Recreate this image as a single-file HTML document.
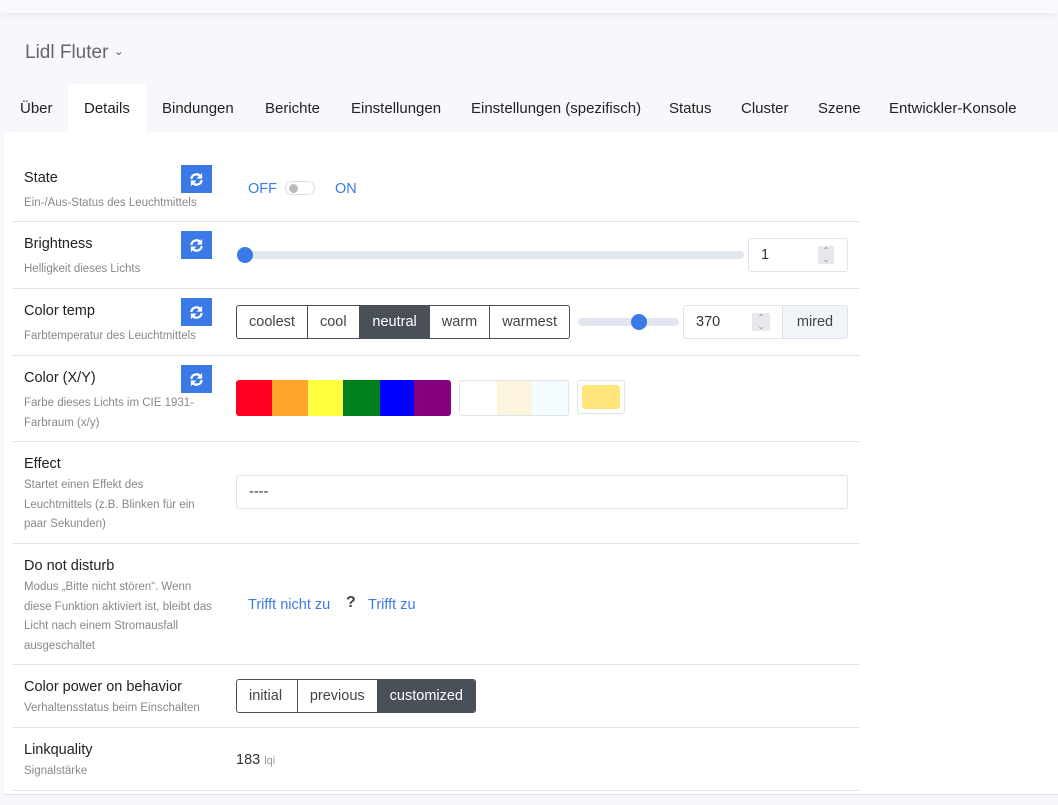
<!DOCTYPE html>
<html><head><meta charset="utf-8"><style>
*{box-sizing:border-box;margin:0;padding:0}
body{width:1058px;height:805px;background:#f7f8fc;font-family:"Liberation Sans",sans-serif;color:#333;position:relative;overflow:hidden}
.a{position:absolute}
.top{left:0;top:0;width:1058px;height:13px;background:#f8f9fc;box-shadow:0 2px 8px rgba(0,0,0,.06)}
.tab{top:100px;font-size:15px;color:#222}
.card{left:4px;top:132px;width:1054px;height:663px;background:#fff;border-bottom:1px solid #dfe3ea}
.line{left:12px;width:848px;height:1px;background:#dfe3ea}
.t{left:24px;font-size:14.5px;color:#222}
.s{left:24px;font-size:11.5px;color:#888;line-height:19.5px;width:185px}
.rb{left:181px;width:31px;height:28px;background:#3b7ae6;color:#fff;display:flex;align-items:center;justify-content:center}
.bg{display:flex;border:1px solid #4a5058;border-radius:3px;overflow:hidden;height:34px}
.bg div{padding:0 12px;line-height:32px;font-size:14.5px;color:#444;border-left:1px solid #4a5058}
.bg div:first-child{border-left:none}
.bg .on{background:#4a5058;color:#fff}
.lk{color:#3b7ae6;font-size:14.5px}
</style></head><body>
<div class="a top"></div>
<div class="a" style="left:25px;top:42px;font-size:19px;color:#666">Lidl Fluter <span style="font-size:12px;vertical-align:3px">&#8964;</span></div>
<div class="a" style="left:68px;top:84px;width:78px;height:50px;background:#fff"></div>
<div class="a tab" style="left:20px">Über</div>
<div class="a tab" style="left:84px">Details</div>
<div class="a tab" style="left:162px">Bindungen</div>
<div class="a tab" style="left:265px">Berichte</div>
<div class="a tab" style="left:351px">Einstellungen</div>
<div class="a tab" style="left:471px">Einstellungen (spezifisch)</div>
<div class="a tab" style="left:669px">Status</div>
<div class="a tab" style="left:741px">Cluster</div>
<div class="a tab" style="left:818px">Szene</div>
<div class="a tab" style="left:889px">Entwickler-Konsole</div>
<div class="a card"></div>

<svg width="0" height="0" style="position:absolute"><defs><symbol id="r" viewBox="0 0 16 16"><path d="M2.5 7.5a5.5 5.5 0 0 1 9.7-3" stroke="#fff" stroke-width="2.4" fill="none"/><path d="M14 1v6h-6z" fill="#fff"/><path d="M13.5 8.5a5.5 5.5 0 0 1-9.7 3" stroke="#fff" stroke-width="2.4" fill="none"/><path d="M2 15v-6h6z" fill="#fff"/></symbol></defs></svg>

<div class="a t" style="top:170px">State</div>
<div class="a s" style="top:194px;width:200px">Ein-/Aus-Status des Leuchtmittels</div>
<div class="a rb" style="top:165px"><svg width="15" height="15"><use href="#r"/></svg></div>
<div class="a lk" style="left:248px;top:181px">OFF</div>
<div class="a" style="left:285px;top:181px;width:30px;height:14px;border:1px solid #ddd;border-radius:7px"><div style="margin:2px 0 0 3px;width:9px;height:9px;border-radius:50%;background:#bbb"></div></div>
<div class="a lk" style="left:335px;top:181px">ON</div>
<div class="a line" style="top:221px"></div>

<div class="a t" style="top:236px">Brightness</div>
<div class="a s" style="top:260px">Helligkeit dieses Lichts</div>
<div class="a rb" style="top:231px"><svg width="15" height="15"><use href="#r"/></svg></div>
<div class="a" style="left:238px;top:251px;width:506px;height:8px;background:#e2e6ee;border-radius:4px"></div>
<div class="a" style="left:237px;top:247px;width:16px;height:16px;border-radius:50%;background:#3b7ae6"></div>
<div class="a" style="left:748px;top:238px;width:100px;height:34px;border:1px solid #dfe3ea;border-radius:3px;padding:8px 12px;font-size:14.5px">1</div>
<div class="a" style="left:818px;top:246px;width:16px;height:18px;background:#e8e8ec;font-size:8px;color:#888;text-align:center;line-height:9px">&#8963;<br>&#8964;</div>
<div class="a line" style="top:288px"></div>

<div class="a t" style="top:303px">Color temp</div>
<div class="a s" style="top:327px;width:200px">Farbtemperatur des Leuchtmittels</div>
<div class="a rb" style="top:298px"><svg width="15" height="15"><use href="#r"/></svg></div>
<div class="a bg" style="left:236px;top:305px;width:334px"><div style="flex:72">coolest</div><div style="flex:52">cool</div><div class="on" style="flex:70">neutral</div><div style="flex:61">warm</div><div style="flex:79">warmest</div></div>
<div class="a" style="left:578px;top:318px;width:101px;height:8px;background:#e2e6ee;border-radius:4px"></div>
<div class="a" style="left:631px;top:314px;width:16px;height:16px;border-radius:50%;background:#3b7ae6"></div>
<div class="a" style="left:683px;top:305px;width:165px;height:34px;border:1px solid #dfe3ea;border-radius:3px"></div>
<div class="a" style="left:696px;top:314px;font-size:14.5px">370</div>
<div class="a" style="left:752px;top:313px;width:18px;height:18px;background:#e8e8ec;font-size:8px;color:#888;text-align:center;line-height:9px">&#8963;<br>&#8964;</div>
<div class="a" style="left:782px;top:306px;width:65px;height:32px;background:#f1f4f8;border-left:1px solid #dfe3ea;font-size:14.5px;color:#444;text-align:center;line-height:32px">mired</div>
<div class="a line" style="top:355px"></div>

<div class="a t" style="top:370px">Color (X/Y)</div>
<div class="a s" style="top:394px;width:180px">Farbe dieses Lichts im CIE 1931-Farbraum (x/y)</div>
<div class="a rb" style="top:365px"><svg width="15" height="15"><use href="#r"/></svg></div>
<div class="a" style="left:236px;top:380px;width:215px;height:36px;display:flex;border-radius:3px;overflow:hidden">
<div style="flex:29;background:#ff0020"></div><div style="flex:30;background:#ffa52e"></div><div style="flex:28;background:#ffff40"></div><div style="flex:30;background:#00801c"></div><div style="flex:28;background:#0000ff"></div><div style="flex:30;background:#84007f"></div></div>
<div class="a" style="left:459px;top:380px;width:110px;height:36px;display:flex;border:1px solid #dfe3ea;border-radius:3px;overflow:hidden"><div style="flex:30;background:#fff"></div><div style="flex:29;background:#fcf4dd"></div><div style="flex:29;background:#f5fcff"></div></div>
<div class="a" style="left:577px;top:380px;width:48px;height:34px;border:1px solid #dfe3ea;border-radius:3px;padding:4px"><div style="width:38px;height:24px;background:#ffe57a;border-radius:3px"></div></div>
<div class="a line" style="top:441px"></div>

<div class="a t" style="top:456px">Effect</div>
<div class="a s" style="top:476px;width:178px">Startet einen Effekt des Leuchtmittels (z.B. Blinken für ein paar Sekunden)</div>
<div class="a" style="left:236px;top:475px;width:612px;height:34px;border:1px solid #dfe3ea;border-radius:3px;padding:8px 12px;font-size:14.5px">----</div>
<div class="a line" style="top:543px"></div>

<div class="a t" style="top:558px">Do not disturb</div>
<div class="a s" style="top:578px;width:190px">Modus „Bitte nicht stören“. Wenn diese Funktion aktiviert ist, bleibt das Licht nach einem Stromausfall ausgeschaltet</div>
<div class="a lk" style="left:248px;top:597px">Trifft nicht zu</div>
<div class="a" style="left:346px;top:594px;font-size:16px;font-weight:bold;color:#444">?</div>
<div class="a lk" style="left:368px;top:597px">Trifft zu</div>
<div class="a line" style="top:664px"></div>

<div class="a t" style="top:679px">Color power on behavior</div>
<div class="a s" style="top:699px;width:200px">Verhaltensstatus beim Einschalten</div>
<div class="a bg" style="left:236px;top:679px;width:240px"><div style="flex:60">initial</div><div style="flex:80">previous</div><div class="on" style="flex:100">customized</div></div>
<div class="a line" style="top:727px"></div>

<div class="a t" style="top:742px">Linkquality</div>
<div class="a s" style="top:762px">Signalstärke</div>
<div class="a" style="left:236px;top:752px;font-size:14.5px">183 <span style="font-size:11px;color:#999">lqi</span></div>
<div class="a line" style="top:790px"></div>
</body></html>
